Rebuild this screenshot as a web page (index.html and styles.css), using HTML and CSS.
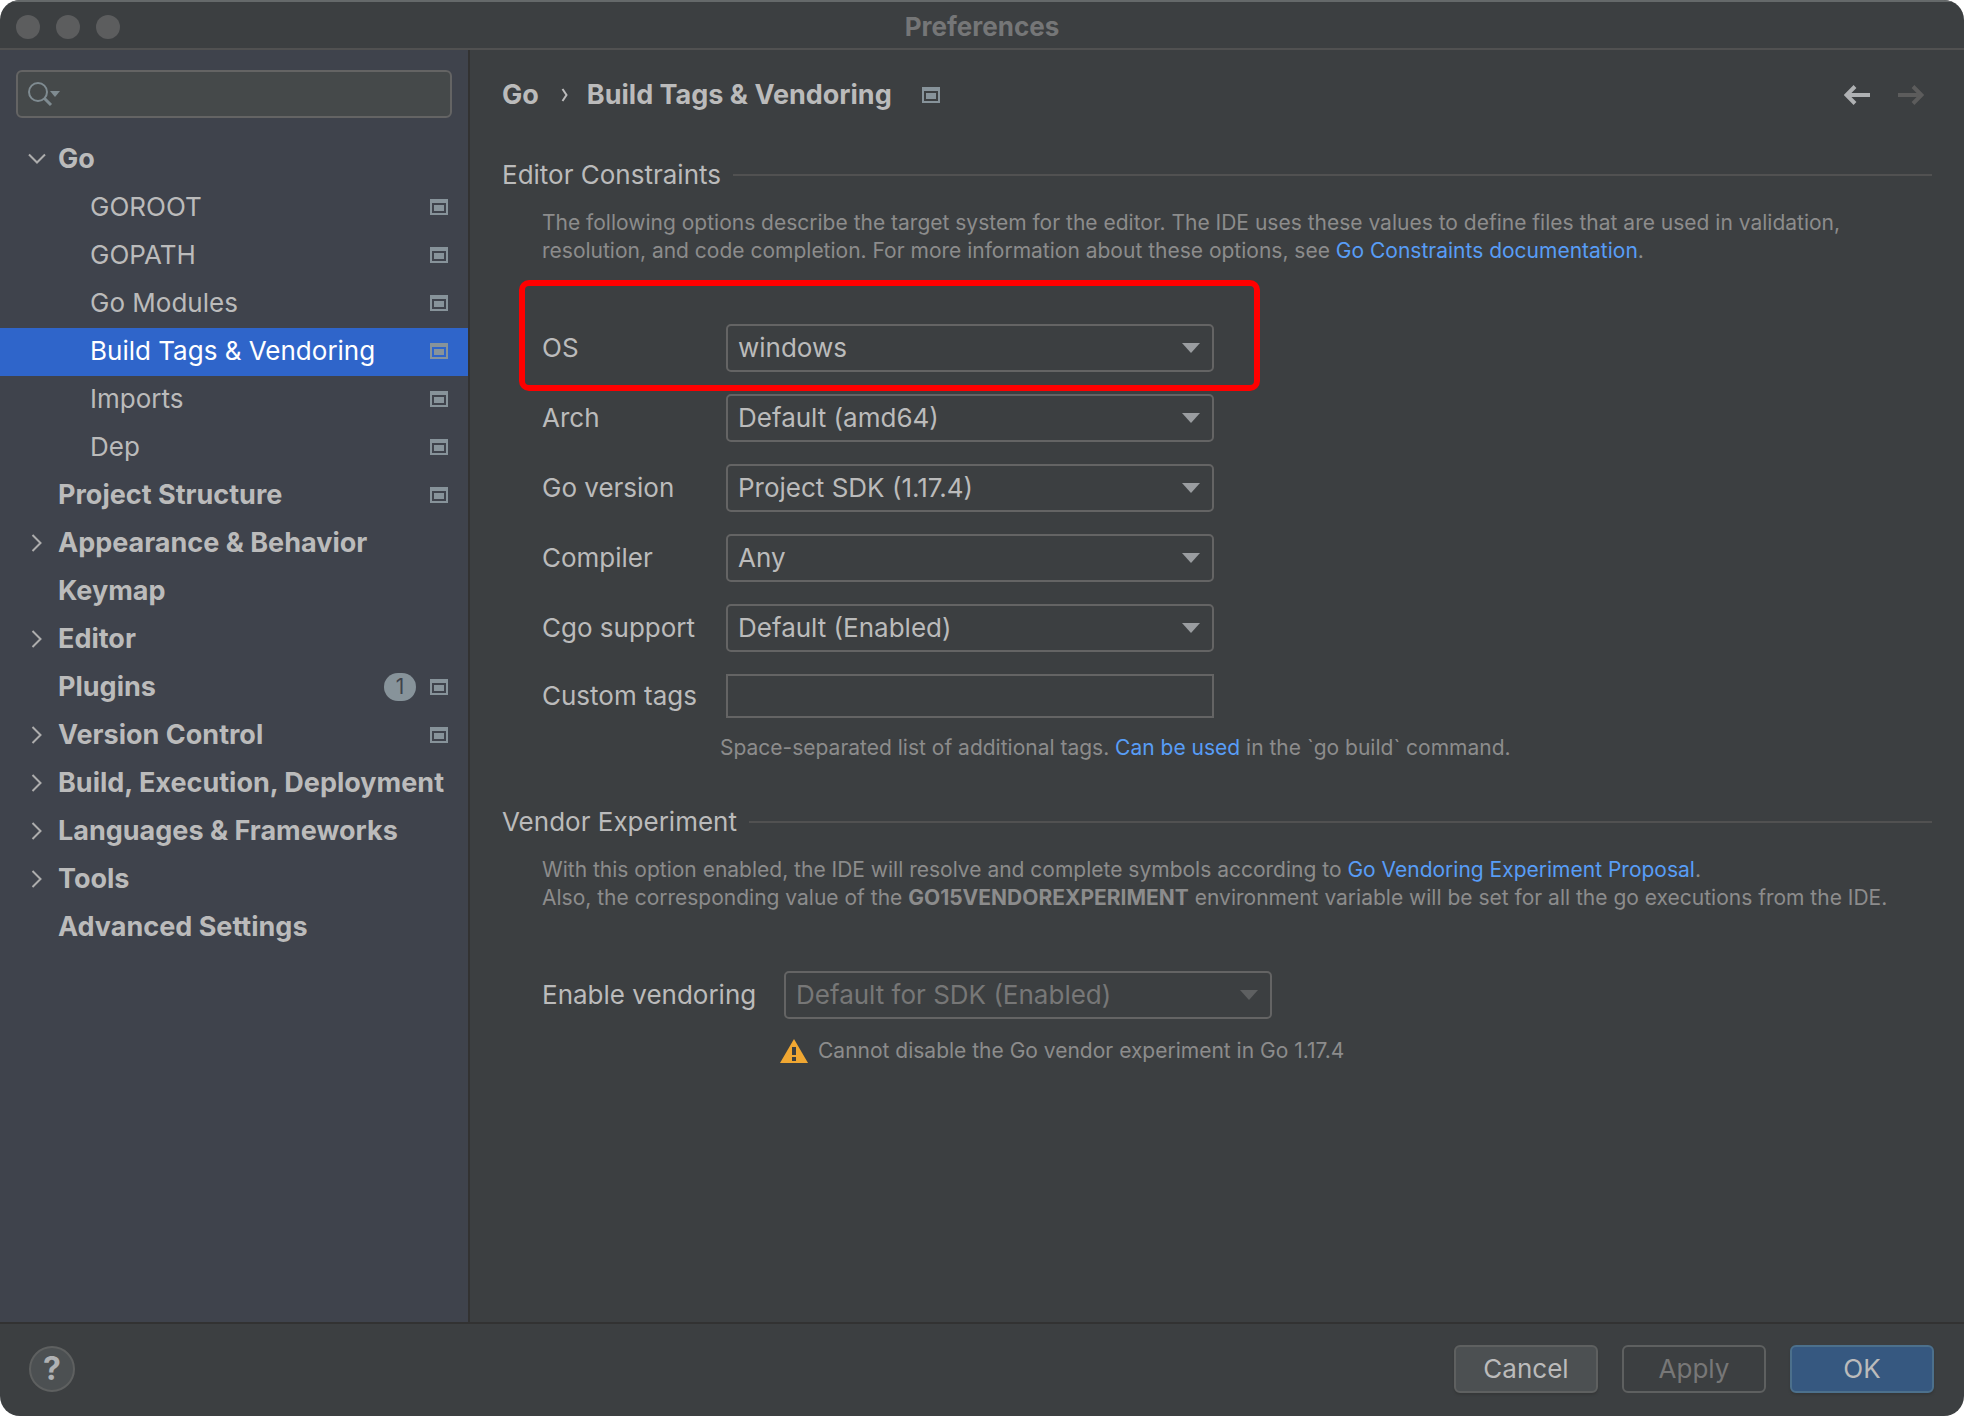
FILE: index.html
```html
<!DOCTYPE html>
<html lang="en">
<head>
<meta charset="utf-8">
<title>Preferences</title>
<link rel="stylesheet" href="styles.css">
</head>
<body>
<svg class="defs" aria-hidden="true">
  <symbol id="project" viewBox="0 0 18 16"><path fill="currentColor" fill-rule="evenodd" d="M0 0h18v16H0zM2 4v10h14V4zM4 6h10v6H4z"/></symbol>
  <symbol id="chevron" viewBox="0 0 18 18"><path fill="none" stroke="currentColor" stroke-width="2" d="M4.500 1l8 8-8 8"/></symbol>
  <symbol id="caret" viewBox="0 0 18 10"><path fill="currentColor" d="M0 0h18L9 10z"/></symbol>
  <symbol id="arrow" viewBox="0 0 26 20"><path fill="none" stroke="currentColor" stroke-width="4" d="M26 10H3"/><path fill="none" stroke="currentColor" stroke-width="4" d="M11 1.500L2.500 10l8.500 8.500"/></symbol>
</svg>
<div class="window">
  <header class="titlebar">
    <div class="lights"><span></span><span></span><span></span></div>
    <h1>Preferences</h1>
  </header>
  <div class="body">
    <aside class="sidebar">
      <label class="search">
        <svg width="34" height="26" viewBox="0 0 34 26" aria-hidden="true"><circle cx="10" cy="11" r="9" fill="none" stroke="#7f8b91" stroke-width="2"/><path d="M16 17l7 7" stroke="#7f8b91" stroke-width="3"/><path d="M22 10h10l-5 6z" fill="#7f8b91"/></svg>
        <input type="text" aria-label="Search settings">
      </label>
      <nav>
        <ul class="tree">
          <li><a href="#"><svg class="chev open"><use href="#chevron"/></svg><span>Go</span></a></li>
          <li><a class="child" href="#"><span>GOROOT</span><svg class="proj"><use href="#project"/></svg></a></li>
          <li><a class="child" href="#"><span>GOPATH</span><svg class="proj"><use href="#project"/></svg></a></li>
          <li><a class="child" href="#"><span>Go Modules</span><svg class="proj"><use href="#project"/></svg></a></li>
          <li><a class="child selected" href="#" aria-current="page"><span>Build Tags &amp; Vendoring</span><svg class="proj"><use href="#project"/></svg></a></li>
          <li><a class="child" href="#"><span>Imports</span><svg class="proj"><use href="#project"/></svg></a></li>
          <li><a class="child" href="#"><span>Dep</span><svg class="proj"><use href="#project"/></svg></a></li>
          <li><a class="leaf" href="#"><span>Project Structure</span><svg class="proj"><use href="#project"/></svg></a></li>
          <li><a href="#"><svg class="chev"><use href="#chevron"/></svg><span>Appearance &amp; Behavior</span></a></li>
          <li><a class="leaf" href="#"><span>Keymap</span></a></li>
          <li><a href="#"><svg class="chev"><use href="#chevron"/></svg><span>Editor</span></a></li>
          <li><a class="leaf" href="#"><span>Plugins</span><b class="badge">1</b><svg class="proj"><use href="#project"/></svg></a></li>
          <li><a href="#"><svg class="chev"><use href="#chevron"/></svg><span>Version Control</span><svg class="proj"><use href="#project"/></svg></a></li>
          <li><a href="#"><svg class="chev"><use href="#chevron"/></svg><span>Build, Execution, Deployment</span></a></li>
          <li><a href="#"><svg class="chev"><use href="#chevron"/></svg><span>Languages &amp; Frameworks</span></a></li>
          <li><a href="#"><svg class="chev"><use href="#chevron"/></svg><span>Tools</span></a></li>
          <li><a class="leaf" href="#"><span>Advanced Settings</span></a></li>
        </ul>
      </nav>
    </aside>
    <main class="content">
      <div class="crumbs">
        <span>Go</span>
        <svg class="sep" viewBox="0 0 8 14" aria-hidden="true"><path d="M1.500 1l4 6-4 6" fill="none" stroke="#bbb" stroke-width="2"/></svg>
        <h2>Build Tags &amp; Vendoring</h2>
        <svg class="proj"><use href="#project"/></svg>
        <div class="history">
          <button type="button" aria-label="Back"><svg><use href="#arrow"/></svg></button>
          <button type="button" class="forward" aria-label="Forward" disabled><svg><use href="#arrow"/></svg></button>
        </div>
      </div>

      <section>
        <h3>Editor Constraints</h3>
        <p class="note">The following options describe the target system for the editor. The IDE uses these values to define files that are used in validation,<br>resolution, and code completion. For more information about these options, see <a href="#">Go Constraints documentation</a>.</p>
        <div class="form">
          <label for="os">OS</label>
          <div class="combo"><select id="os"><option>windows</option></select><svg><use href="#caret"/></svg></div>
          <label for="arch">Arch</label>
          <div class="combo"><select id="arch"><option>Default (amd64)</option></select><svg><use href="#caret"/></svg></div>
          <label for="gover">Go version</label>
          <div class="combo"><select id="gover"><option>Project SDK (1.17.4)</option></select><svg><use href="#caret"/></svg></div>
          <label for="compiler">Compiler</label>
          <div class="combo"><select id="compiler"><option>Any</option></select><svg><use href="#caret"/></svg></div>
          <label for="cgo">Cgo support</label>
          <div class="combo"><select id="cgo"><option>Default (Enabled)</option></select><svg><use href="#caret"/></svg></div>
          <label for="tags">Custom tags</label>
          <input class="tags" id="tags" type="text">
          <div class="highlight"></div>
        </div>
        <p class="hint">Space-separated list of additional tags. <a href="#">Can be used</a> in the `go build` command.</p>
      </section>

      <section class="vendor">
        <h3>Vendor Experiment</h3>
        <p class="note">With this option enabled, the IDE will resolve and complete symbols according to <a href="#">Go Vendoring Experiment Proposal</a>.<br>Also, the corresponding value of the <b>GO15VENDOREXPERIMENT</b> environment variable will be set for all the go executions from the IDE.</p>
        <div class="form wide">
          <label for="vendoring">Enable vendoring</label>
          <div class="combo"><select id="vendoring" disabled><option>Default for SDK (Enabled)</option></select><svg><use href="#caret"/></svg></div>
        </div>
        <p class="warning"><svg width="28" height="24" viewBox="0 0 28 24" aria-hidden="true"><path fill="#f0a732" d="M14 0l14 24H0z"/><path fill="#3c3f41" d="M12 8h4v8h-4zM12 18h4v4h-4z"/></svg>Cannot disable the Go vendor experiment in Go 1.17.4</p>
      </section>
    </main>
  </div>
  <footer class="footer">
    <button type="button" class="help" aria-label="Help">?</button>
    <button type="button" class="btn">Cancel</button>
    <button type="button" class="btn" disabled>Apply</button>
    <button type="button" class="btn primary">OK</button>
  </footer>
</div>
</body>
</html>
```
FILE: styles.css
```css
* { box-sizing: border-box; }

body {
  margin: 0;
  background: #fff;
  color: #bbb;
  font: 26px/32px Inter, "Liberation Sans", sans-serif;
}

h1, h2, h3, p, ul { margin: 0; padding: 0; font-size: inherit; }
a { color: #589df6; text-decoration: none; }
button, input, select { font: inherit; color: inherit; margin: 0; }
svg { display: block; flex: none; }
.defs { position: absolute; width: 0; height: 0; }

.window {
  display: flex;
  flex-direction: column;
  min-height: 100vh;
  overflow: hidden;
  border-radius: 20px;
  background: #3c3f41;
}

.titlebar {
  display: grid;
  grid-template-columns: 1fr auto 1fr;
  align-items: center;
  height: 50px;
  padding: 4px 16px 0;
  border-top: 2px solid #65696a;
  border-bottom: 2px solid #515151;
}
.titlebar h1 { font-weight: 700; color: #757677; }
.lights { display: flex; gap: 16px; }
.lights span { width: 24px; height: 24px; border-radius: 50%; background: #5c5d5e; }

.body { display: flex; flex: 1; }

.sidebar {
  flex: none;
  width: 470px;
  padding-top: 20px;
  background: #3f434c;
  border-right: 2px solid #323232;
}
.search {
  display: flex;
  align-items: center;
  gap: 4px;
  height: 48px;
  margin: 0 16px 18px;
  padding-left: 10px;
  border: 2px solid #646464;
  border-radius: 6px;
  background: #45494a;
}
.search input { flex: 1; min-width: 0; border: 0; outline: 0; background: none; }

.tree { list-style: none; }
.tree a {
  display: flex;
  align-items: center;
  gap: 12px;
  height: 48px;
  padding: 0 20px 3px 28px;
  color: #bbb;
  font-size: 27px;
  font-weight: 700;
  white-space: nowrap;
}
.tree span { flex: 1; }
.tree .leaf { padding-left: 58px; }
.tree .child { padding-left: 90px; font-size: 26px; font-weight: 400; }
.tree .selected { background: #2f65ca; color: #fff; }
.chev { width: 18px; height: 18px; color: #adadad; }
.chev.open { transform: rotate(90deg); }
.proj { width: 18px; height: 16px; color: #87939a; }
.badge {
  width: 32px;
  height: 28px;
  margin-right: 2px;
  border-radius: 14px;
  background: #87939a;
  color: #3f434c;
  font-size: 21px;
  font-weight: 400;
  line-height: 28px;
  text-align: center;
}

.content { flex: 1; min-width: 0; padding: 29px 32px 40px; }

.crumbs { display: flex; align-items: center; font-size: 27px; font-weight: 700; }
.crumbs h2 { font-weight: 700; }
.sep { width: 8px; height: 14px; margin: 0 18px 0 22px; }
.crumbs .proj { margin-left: 30px; }
.history { display: flex; gap: 28px; margin-left: auto; padding-right: 8px; }
.history button { padding: 0; border: 0; background: none; color: #afb1b3; }
.history svg { width: 26px; height: 20px; }
.history .forward { color: #5c5c5c; }
.forward svg { transform: scaleX(-1); }

section { margin-top: 48px; }
.vendor { margin-top: 44px; }
h3 { display: flex; align-items: center; gap: 12px; font-weight: 400; }
h3::after { content: ""; flex: 1; height: 2px; background: #515151; }

.note, .hint, .warning { color: #8c8c8c; font-size: 21px; line-height: 28px; }
.note { margin: 18px 0 0 40px; }

.form {
  position: relative;
  display: grid;
  grid-template-columns: 184px 488px;
  row-gap: 22px;
  align-items: center;
  margin: 59px 0 0 40px;
}
.form.wide { grid-template-columns: 242px 488px; }
.combo { display: grid; align-items: center; }
.combo select, .combo svg { grid-area: 1 / 1; }
.combo select {
  appearance: none;
  height: 48px;
  padding: 0 40px 0 10px;
  border: 2px solid #646464;
  border-radius: 5px;
  background: none;
}
.combo select:disabled { color: #777; opacity: 1; }
.combo svg { width: 18px; height: 10px; margin-right: 14px; justify-self: end; color: #9a9da0; pointer-events: none; }
.combo select:disabled + svg { color: #5e6061; }
.tags { height: 44px; padding: 0 10px; border: 2px solid #646464; border-radius: 0; background: none; }
.highlight {
  position: absolute;
  left: -23px;
  top: -44px;
  width: 741px;
  height: 111px;
  border: 6px solid #f00;
  border-radius: 10px;
  pointer-events: none;
}
.hint { margin: 16px 0 0 218px; }
.warning { display: flex; align-items: center; gap: 10px; margin: 18px 0 0 278px; }

.footer {
  display: flex;
  align-items: center;
  gap: 24px;
  height: 94px;
  padding: 0 30px 2px 29px;
  border-top: 2px solid #323232;
}
.help {
  width: 46px;
  height: 46px;
  margin-right: auto;
  padding: 0;
  border: 2px solid #5e6060;
  border-radius: 50%;
  background: #4c5052;
  color: #afb1b3;
  font-size: 32px;
  font-weight: 700;
}
.btn {
  width: 144px;
  height: 48px;
  padding: 0;
  border: 2px solid #5e6060;
  border-radius: 6px;
  background: #4c5052;
  box-shadow: 0 2px 2px #363839;
}
.btn:disabled { background: none; color: #777; box-shadow: none; }
.primary { border-color: #4c708c; background: #365880; }
```
